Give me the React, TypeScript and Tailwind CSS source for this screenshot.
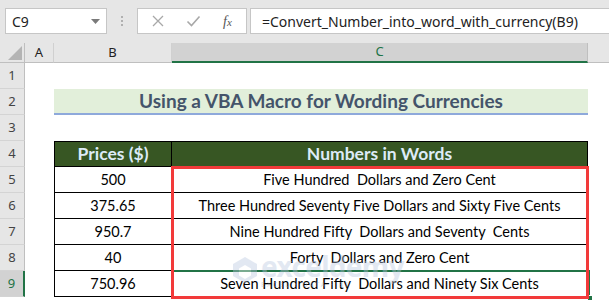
import React from 'react';

const rows = [
  { price: '500', words: 'Five Hundred  Dollars and Zero Cent' },
  { price: '375.65', words: 'Three Hundred Seventy Five Dollars and Sixty Five Cents' },
  { price: '950.7', words: 'Nine Hundred Fifty  Dollars and Seventy  Cents' },
  { price: '40', words: 'Forty  Dollars and Zero Cent' },
  { price: '750.96', words: 'Seven Hundred Fifty  Dollars and Ninety Six Cents' },
];

const uiFont = { fontFamily: '"Noto Sans", "Open Sans", sans-serif' };
const cellFont = { fontFamily: 'Lato, "Noto Sans", sans-serif' };

function RowHead({ n, selected }: { n: number; selected?: boolean }) {
  return (
    <div
      className={`flex items-center justify-center h-[26px] text-[13px] border-b border-[#d4d4d4] ${
        selected
          ? 'bg-[#d2d2d2] text-[#217346] border-r-2 border-r-[#217346]'
          : 'bg-[#e6e6e6] text-[#444] border-r border-r-[#bfbfbf]'
      }`}
      style={uiFont}
    >
      {n}
    </div>
  );
}

export default function App() {
  return (
    <div className="w-[609px] h-[301px] overflow-hidden bg-white flex flex-col">
      {/* Formula bar */}
      <div className="h-[43px] bg-[#e6e6e6] flex items-start pt-[8px] pl-[5px] gap-0">
        <div
          className="w-[102px] h-[26px] bg-white border border-[#c6c6c6] flex items-center justify-between pl-[6px] pr-[6px] text-[14px] text-[#222]"
          style={uiFont}
        >
          <span>C9</span>
          <svg width="9" height="5" viewBox="0 0 9 5">
            <path d="M0 0 L9 0 L4.5 5 Z" fill="#7a7a7a" />
          </svg>
        </div>
        <div className="w-[30px] h-[26px] flex flex-col items-center justify-center gap-[2px]">
          <div className="w-[2px] h-[2px] bg-[#b0b0b0]" />
          <div className="w-[2px] h-[2px] bg-[#b0b0b0]" />
          <div className="w-[2px] h-[2px] bg-[#b0b0b0]" />
        </div>
        <div className="w-[110px] h-[26px] bg-white border border-[#c6c6c6] flex items-center pl-[13px]">
          <svg width="14" height="14" viewBox="0 0 14 14">
            <path d="M2 2 L12 12 M12 2 L2 12" stroke="#a8a8a8" strokeWidth="1.3" />
          </svg>
          <svg className="ml-[21px]" width="15" height="14" viewBox="0 0 15 14">
            <path d="M1.5 7.5 L5.5 11.5 L13.5 2.5" stroke="#a8a8a8" strokeWidth="1.6" fill="none" />
          </svg>
          <span
            className="ml-[22px] text-[14px] italic text-[#555]"
            style={{ fontFamily: '"Liberation Serif", serif' }}
          >
            f<span className="text-[11px]">x</span>
          </span>
        </div>
        <div
          className="ml-[3px] flex-1 h-[26px] bg-white border border-[#c6c6c6] border-r-0 flex items-center pl-[11px] text-[14px] text-[#222]"
          style={uiFont}
        >
          =Convert_Number_into_word_with_currency(B9)
        </div>
      </div>

      {/* Sheet grid */}
      <div className="relative grid grid-cols-[25px_29px_118px_416px_1fr] grid-rows-[20px_repeat(9,26px)] flex-1">
        {/* Column headers */}
        <div className="bg-[#e6e6e6] border-r border-[#bfbfbf] border-b border-b-[#bfbfbf] flex items-end justify-end p-[2px]">
          <svg width="14" height="14" viewBox="0 0 14 14">
            <path d="M14 0 L14 14 L0 14 Z" fill="#b4b4b4" />
          </svg>
        </div>
        <div className="bg-[#e6e6e6] border-r border-[#d0d0d0] border-b border-b-[#bfbfbf] flex items-center justify-center text-[13px] text-[#222]" style={uiFont}>
          A
        </div>
        <div className="bg-[#e6e6e6] border-r border-[#d0d0d0] border-b border-b-[#bfbfbf] flex items-center justify-center text-[13px] text-[#222]" style={uiFont}>
          B
        </div>
        <div className="bg-[#d2d2d2] border-r border-[#bfbfbf] border-b-2 border-b-[#217346] flex items-center justify-center text-[13px] text-[#217346]" style={uiFont}>
          C
        </div>
        <div className="bg-[#e6e6e6] border-b border-b-[#bfbfbf]" />

        {/* Row 1 */}
        <RowHead n={1} />
        <div className="col-span-4" />

        {/* Row 2 - title */}
        <RowHead n={2} />
        <div />
        <div
          className="col-span-2 bg-[#e2efda] border-b-2 border-[#8ea9db] flex items-center justify-center text-[19px] font-bold text-[#44546a]"
          style={cellFont}
        >
          Using a VBA Macro for Wording Currencies
        </div>
        <div />

        {/* Row 3 */}
        <RowHead n={3} />
        <div className="col-span-4" />

        {/* Row 4 - table header */}
        <RowHead n={4} />
        <div />
        <div
          className="bg-[#375623] border border-black flex items-center justify-center text-[17.5px] font-bold text-[#ddebf7]"
          style={cellFont}
        >
          Prices ($)
        </div>
        <div
          className="bg-[#375623] border border-l-0 border-black flex items-center justify-center text-[17.5px] font-bold text-[#ddebf7]"
          style={cellFont}
        >
          Numbers in Words
        </div>
        <div />

        {/* Rows 5-9 */}
        {rows.map((r, i) => (
          <React.Fragment key={r.price}>
            <RowHead n={i + 5} selected={i === 4} />
            <div />
            <div
              className="border-x border-b border-black flex items-center justify-center text-[14.5px] text-black"
              style={cellFont}
            >
              {r.price}
            </div>
            <div
              className="border-r border-b border-black flex items-center justify-center text-[14.5px] text-black whitespace-pre"
              style={cellFont}
            >
              {r.words}
            </div>
            <div />
          </React.Fragment>
        ))}

        {/* Active cell C9 outline */}
        <div className="absolute left-[171px] top-[227px] w-[419px] h-[28px] border-2 border-[#217346] pointer-events-none" />
        <div className="absolute left-[587px] top-[252px] w-[6px] h-[6px] bg-[#217346] border border-white" />

        {/* Watermark */}
        <div className="absolute left-[232px] top-[209px] flex items-center gap-[3px] opacity-40 pointer-events-none">
          <svg width="26" height="28" viewBox="0 0 26 28">
            <path d="M13 1 L25 8 L25 20 L13 27 L1 20 L1 8 Z" fill="#b9c8e0" />
            <path d="M13 9 L19 12.5 L19 19.5 L13 23 L7 19.5 L7 12.5 Z" fill="#ffffff" />
          </svg>
          <div className="flex flex-col leading-none" style={uiFont}>
            <span className="text-[28px] font-bold text-[#b9c8e0] tracking-tight">exceldemy</span>
            <span className="text-[7px] text-[#9aa9c2] tracking-[2px] mt-[1px]">EXCEL · DATA · BI</span>
          </div>
        </div>

        {/* Red highlight box */}
        <div className="absolute left-[171px] top-[123px] w-[418px] h-[133px] border-[3px] border-[#f23a3a] pointer-events-none" />
      </div>
    </div>
  );
}
